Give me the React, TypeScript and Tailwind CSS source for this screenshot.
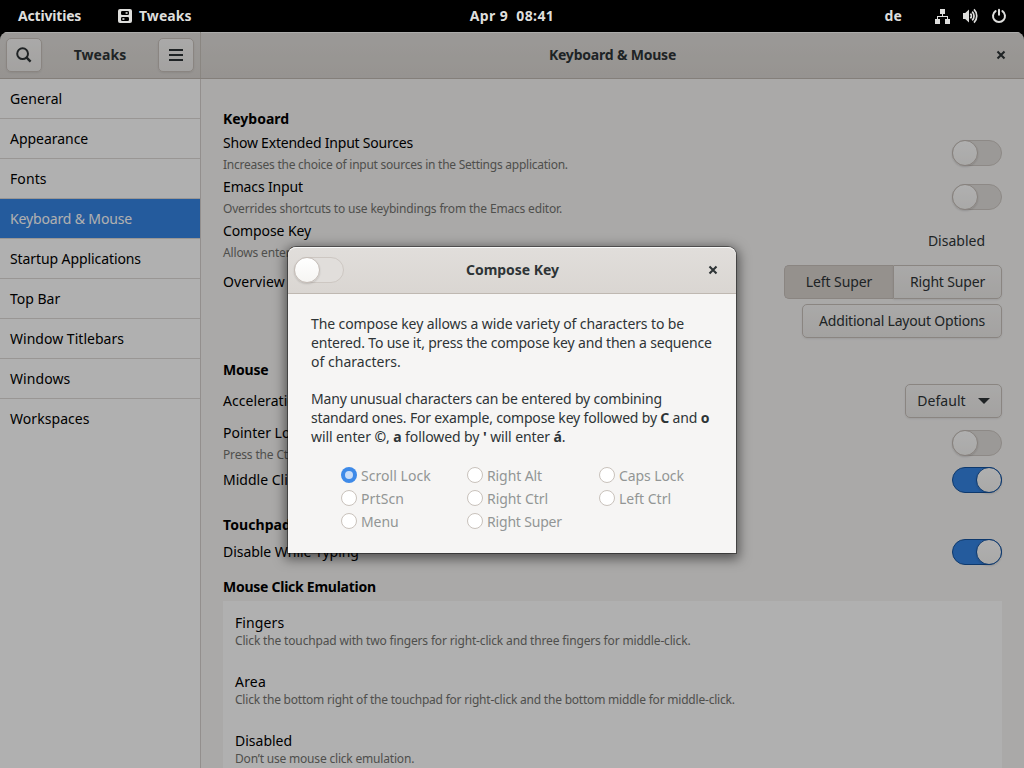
import type { ReactNode } from "react";

function TweaksGlyph() {
  return (
    <svg width="14" height="14" viewBox="0 0 14 14" className="block">
      <rect width="14" height="14" rx="2" fill="#dededc" />
      <rect x="3" y="2" width="8" height="4" rx="1.2" fill="#000" />
      <rect x="3" y="8" width="8" height="4" rx="1.2" fill="#000" />
      <rect x="7.6" y="3.2" width="2" height="1.6" fill="#dededc" />
      <rect x="4.4" y="9.2" width="2" height="1.6" fill="#dededc" />
    </svg>
  );
}

function NetworkGlyph() {
  return (
    <svg width="16" height="16" viewBox="0 0 16 16" className="block" fill="#dededc">
      <rect x="6" y="1" width="5" height="5" />
      <rect x="1" y="11" width="5" height="5" />
      <rect x="11" y="11" width="5" height="5" />
      <path d="M8 6h1v2h5v3h-1V9H4v2H3V8h5z" />
    </svg>
  );
}

function VolumeGlyph() {
  return (
    <svg width="16" height="16" viewBox="0 0 16 16" className="block" fill="none" stroke="#dededc">
      <path d="M1 5h2.2L7 1.6v12.8L3.2 11H1z" fill="#dededc" stroke="none" />
      <path d="M8.4 5.6a3.4 3.4 0 0 1 0 4.8" strokeWidth="1.7" />
      <path d="M10.2 3.6a6.2 6.2 0 0 1 0 8.8" strokeWidth="1.7" />
      <path d="M12 1.4a9.3 9.3 0 0 1 0 13.2" strokeWidth="1.7" />
    </svg>
  );
}

function PowerGlyph() {
  return (
    <svg width="16" height="16" viewBox="0 0 16 16" className="block" fill="none" stroke="#dededc" strokeWidth="2" strokeLinecap="round">
      <path d="M4.6 3.1a6 6 0 1 0 6.8 0" />
      <path d="M8 1.8v5" />
    </svg>
  );
}

function CloseGlyph() {
  return (
    <svg width="10" height="10" viewBox="0 0 10 10" className="block" stroke="#2e3436" strokeWidth="2.1">
      <path d="M1.5 1.5l7 7M8.5 1.5l-7 7" />
    </svg>
  );
}

function Switch({ on = false }: { on?: boolean }) {
  return (
    <div
      className={
        "flex h-[26px] w-[50px] shrink-0 items-center rounded-full border " +
        (on ? "justify-end border-[#15539e] bg-[#3584e4]" : "justify-start border-[#cdc7c2] bg-[#e1dedb]")
      }
    >
      <div
        className={
          "-mx-px size-[26px] shrink-0 rounded-full border bg-linear-to-b from-white to-[#f6f5f3] shadow-[0_1px_2px_rgba(0,0,0,0.14)] " +
          (on ? "border-[#15539e]" : "border-[#c4bcb6]")
        }
      />
    </div>
  );
}

const button =
  "flex h-[34px] items-center justify-center border border-[#c8c1bb] bg-linear-to-b from-[#f6f5f4] to-[#edebe9] text-[#2e3436] shadow-[0_1px_2px_rgba(0,0,0,0.08)]";

function Heading({ children, className = "" }: { children: ReactNode; className?: string }) {
  return <div className={"h-[22px] font-bold leading-[22px] whitespace-nowrap " + className}>{children}</div>;
}

function Setting({
  title,
  note,
  className = "",
  titleClass = "",
  noteClass = "",
  children,
}: {
  title: string;
  note?: string;
  className?: string;
  titleClass?: string;
  noteClass?: string;
  children?: ReactNode;
}) {
  return (
    <div className={"flex items-center justify-between " + className}>
      <div className={"whitespace-nowrap" + (note ? " pt-[2px]" : "")}>
        <div className={"leading-[22px] " + titleClass}>{title}</div>
        {note && <div className={"text-[12px] leading-[22px] text-[#73736f] " + noteClass}>{note}</div>}
      </div>
      {children}
    </div>
  );
}

const pages = [
  { name: "General", spacing: "tracking-[0.1px]" },
  { name: "Appearance", spacing: "tracking-[-0.03px]" },
  { name: "Fonts", spacing: "tracking-[0.1px]" },
  { name: "Keyboard & Mouse", spacing: "tracking-[-0.15px]" },
  { name: "Startup Applications", spacing: "tracking-[-0.09px]" },
  { name: "Top Bar", spacing: "tracking-[0px]" },
  { name: "Window Titlebars", spacing: "tracking-[0.02px]" },
  { name: "Windows", spacing: "tracking-[0.06px]" },
  { name: "Workspaces", spacing: "tracking-[0.06px]" },
];

const emulation = [
  {
    name: "Fingers",
    spacing: "tracking-[0.1px]",
    note: "Click the touchpad with two fingers for right-click and three fingers for middle-click.",
    noteSpacing: "tracking-[-0.16px]",
  },
  {
    name: "Area",
    spacing: "tracking-[0.2px]",
    note: "Click the bottom right of the touchpad for right-click and the bottom middle for middle-click.",
    noteSpacing: "tracking-[-0.21px]",
  },
  {
    name: "Disabled",
    spacing: "tracking-[0px]",
    note: "Don’t use mouse click emulation.",
    noteSpacing: "tracking-[-0.19px]",
  },
];

const keys = [
  { name: "Scroll Lock", spacing: "tracking-[0.05px]", on: true },
  { name: "Right Alt", spacing: "tracking-[-0.1px]" },
  { name: "Caps Lock", spacing: "tracking-[-0.1px]" },
  { name: "PrtScn", spacing: "tracking-[0.12px]" },
  { name: "Right Ctrl", spacing: "tracking-[-0.06px]" },
  { name: "Left Ctrl", spacing: "tracking-[0px]" },
  { name: "Menu", spacing: "tracking-[-0.1px]" },
  { name: "Right Super", spacing: "tracking-[-0.18px]" },
];

function TopBar() {
  return (
    <div className="grid h-8 grid-cols-3 items-center bg-black font-bold text-[#dededc]">
      <div className="flex items-center pl-[18px]">
        <span className="w-[100px] tracking-[-0.18px]">Activities</span>
        <TweaksGlyph />
        <span className="pl-[7px] tracking-[0.05px]">Tweaks</span>
      </div>
      <div className="text-center tracking-[0.4px] whitespace-pre">Apr 9  08:41</div>
      <div className="flex items-center justify-end pr-[17px]">
        <span className="mr-[32px] tracking-[0.1px]">de</span>
        <NetworkGlyph />
        <span className="w-3" />
        <VolumeGlyph />
        <span className="w-[13px]" />
        <PowerGlyph />
      </div>
    </div>
  );
}

function Sidebar() {
  return (
    <div className="flex w-[201px] shrink-0 flex-col border-r border-[#d5d0cc] bg-white">
      {pages.map((p) => (
        <div
          key={p.name}
          className={
            "h-10 border-b border-[#dedad7] pl-[10px] leading-[39px] last:border-b-0 " +
            p.spacing +
            (p.name === "Keyboard & Mouse" ? " bg-[#3584e4] bg-clip-padding text-white" : "")
          }
        >
          {p.name}
        </div>
      ))}
    </div>
  );
}

function Settings() {
  return (
    <div className="flex-1 overflow-hidden bg-[#f6f5f4] px-[22px] pt-[29px]">
      <Heading className="mb-px tracking-[0px]">Keyboard</Heading>
      <Setting
        className="h-11"
        title="Show Extended Input Sources"
        titleClass="tracking-[-0.21px]"
        note="Increases the choice of input sources in the Settings application."
        noteClass="tracking-[-0.245px]"
      >
        <Switch />
      </Setting>
      <Setting
        className="h-11"
        title="Emacs Input"
        titleClass="tracking-[-0.14px]"
        note="Overrides shortcuts to use keybindings from the Emacs editor."
        noteClass="tracking-[-0.175px]"
      >
        <Switch />
      </Setting>
      <Setting
        className="h-11"
        title="Compose Key"
        titleClass="tracking-[-0.1px]"
        note="Allows entering additional characters."
        noteClass="tracking-[-0.16px]"
      >
        <span className="pr-[17px] tracking-[0px] text-[#2e3436]">Disabled</span>
      </Setting>
      <Setting className="h-[38px]" title="Overview Shortcut" titleClass="tracking-[0.1px]">
        <div className="flex">
          <div className="flex h-[34px] w-[109px] items-center justify-center rounded-l-[5px] border border-r-0 border-[#c8c1bb] bg-[#d8d2cd] tracking-[-0.1px] text-[#2e3436]">
            Left Super
          </div>
          <div className={button + " w-[109px] rounded-r-[5px] tracking-[-0.17px]"}>Right Super</div>
        </div>
      </Setting>
      <div className="mt-[3px] flex justify-end">
        <div className={button + " w-[200px] rounded-[5px] tracking-[-0.2px]"}>Additional Layout Options</div>
      </div>

      <Heading className="mt-[21px] tracking-[-0.2px]">Mouse</Heading>
      <Setting className="mt-[3px] h-[34px]" title="Acceleration Profile" titleClass="tracking-[0.05px]">
        <div className={button + " w-[97px] gap-3 rounded-[5px]"}>
          <span className="tracking-[0.05px]">Default</span>
          <svg width="12" height="6" viewBox="0 0 12 6" className="block">
            <path d="M0 0h12L6 6z" fill="#2e3436" />
          </svg>
        </div>
      </Setting>
      <Setting
        className="mt-[3px] h-11"
        title="Pointer Location"
        note="Press the Ctrl key to highlight the pointer."
        noteClass="tracking-[-0.16px]"
      >
        <Switch />
      </Setting>
      <Setting className="mt-[2px] h-[26px]" title="Middle Click Paste">
        <Switch on />
      </Setting>

      <Heading className="mt-[21px] tracking-[0.08px]">Touchpad</Heading>
      <Setting className="mt-[3px] h-[26px]" title="Disable While Typing" titleClass="tracking-[-0.04px]">
        <Switch on />
      </Setting>
      <Heading className="mt-[11px] tracking-[-0.26px]">Mouse Click Emulation</Heading>
      <div className="mt-[3px] bg-white px-3 pt-px">
        {emulation.map((e) => (
          <div key={e.name} className="flex h-[59px] flex-col justify-center whitespace-nowrap">
            <div className={"leading-[18px] " + e.spacing}>{e.name}</div>
            <div className={"text-[12px] leading-[18px] text-[#73736f] " + e.noteSpacing}>{e.note}</div>
          </div>
        ))}
      </div>
    </div>
  );
}

function ComposeDialog() {
  return (
    <div className="flex h-[306px] w-[448px] flex-col overflow-hidden rounded-t-[8px] bg-[#f6f5f4] text-[#2e3436] shadow-[0_0_0_1px_rgba(0,0,0,0.4),0_3px_12px_3px_rgba(0,0,0,0.5)]">
      <div className="flex h-[47px] shrink-0 items-center justify-between rounded-t-[8px] border-b border-[#bfb8b1] bg-linear-to-b from-[#e1dedb] to-[#dad6d2] pr-[18px] pl-[6px] shadow-[inset_0_1px_rgba(255,255,255,0.8)]">
        <Switch />
        <span className="pl-[13px] font-bold tracking-[-0.03px]">Compose Key</span>
        <span className="flex w-[50px] justify-end">
          <CloseGlyph />
        </span>
      </div>
      <div className="px-[23px] pt-[20px] leading-[19px] whitespace-nowrap">
        <p>
          <span className="tracking-[-0.11px]">The compose key allows a wide variety of characters to be</span>
          <br />
          <span className="tracking-[-0.18px]">entered. To use it, press the compose key and then a sequence</span>
          <br />
          <span className="tracking-[0.03px]">of characters.</span>
        </p>
        <p className="mt-[18px]">
          <span className="tracking-[-0.18px]">Many unusual characters can be entered by combining</span>
          <br />
          <span className="tracking-[-0.18px]">
            standard ones. For example, compose key followed by <b>C</b> and <b>o</b>
          </span>
          <br />
          <span className="tracking-[-0.09px]">
            will enter <b className="font-['Open_Sans',sans-serif]">©</b>, <b>a</b> followed by <b>'</b> will enter <b>á</b>.
          </span>
        </p>
      </div>
      <div className="mt-[17px] grid grid-cols-[126px_132px_auto] pl-[53px] text-[#929595]">
        {keys.map((k) => (
          <div key={k.name} className="flex h-[23px] items-center gap-1 whitespace-nowrap">
            {k.on ? (
              <span className="flex size-4 items-center justify-center rounded-full bg-[#3e8ae8]">
                <span className="size-2 rounded-full bg-[#c9ddf8]" />
              </span>
            ) : (
              <span className="size-4 rounded-full border border-[#c9c2bc] bg-white" />
            )}
            <span className={"pt-[2px] " + k.spacing}>{k.name}</span>
          </div>
        ))}
      </div>
    </div>
  );
}

export default function App() {
  return (
    <div className="flex h-screen w-screen flex-col overflow-hidden bg-black font-['Noto_Sans',sans-serif] text-[14px] leading-5 text-black">
      <TopBar />
      <div className="relative flex min-h-0 flex-1 flex-col overflow-hidden rounded-t-[8px]">
        <div className="flex h-[47px] shrink-0 border-b border-[#bfb8b1] bg-linear-to-b from-[#e1dedb] to-[#dad6d2] font-bold text-[#2e3436] shadow-[inset_0_1px_rgba(255,255,255,0.8)]">
          <div className="flex w-[201px] items-center justify-between border-r border-[#c8c2bc] px-[6px]">
            <div className={button + " w-9 rounded-[5px]"}>
              <svg width="16" height="16" viewBox="0 0 16 16" className="block" fill="none" stroke="#2e3436" strokeWidth="2">
                <circle cx="6.6" cy="6.7" r="5.4" />
                <path d="M10.4 10.4L14.6 14.6" strokeWidth="2.4" />
              </svg>
            </div>
            <span className="tracking-[0.08px]">Tweaks</span>
            <div className={button + " w-9 rounded-[5px]"}>
              <svg width="14" height="12" viewBox="0 0 14 12" className="block" fill="#2e3436">
                <path d="M0 0h14v2H0zM0 5h14v2H0zM0 10h14v2H0z" />
              </svg>
            </div>
          </div>
          <div className="grid flex-1 grid-cols-[1fr_auto_1fr] items-center pr-[18px] pl-[18px]">
            <span />
            <span className="tracking-[-0.2px]">Keyboard &amp; Mouse</span>
            <span className="flex justify-end">
              <CloseGlyph />
            </span>
          </div>
        </div>
        <div className="flex min-h-0 flex-1">
          <Sidebar />
          <Settings />
        </div>
        <div className="absolute inset-0 flex items-center justify-center bg-black/31">
          <ComposeDialog />
        </div>
      </div>
    </div>
  );
}
